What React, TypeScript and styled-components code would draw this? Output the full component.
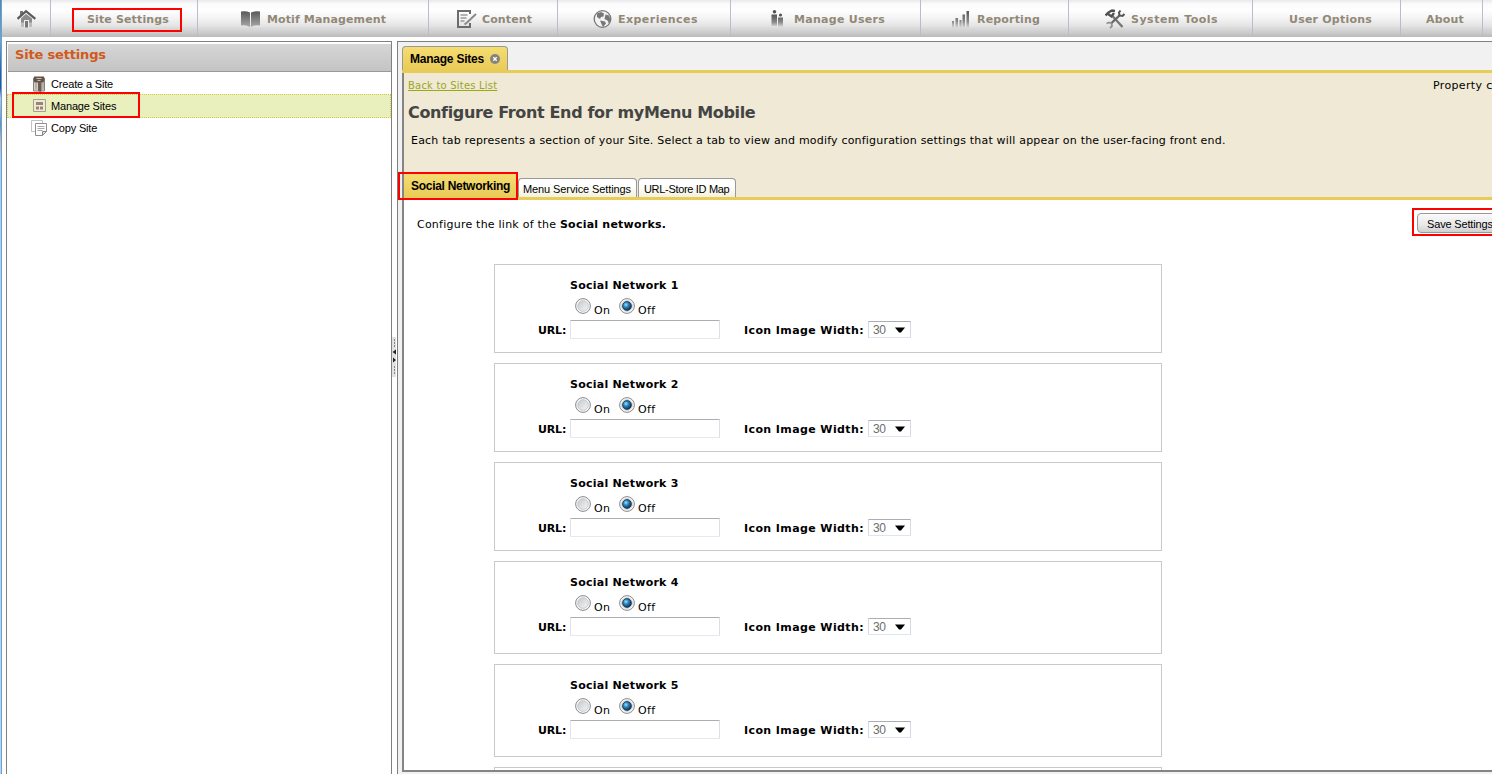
import React from "react";
import styled, { createGlobalStyle } from "styled-components";

const verdana = `"DejaVu Sans", Verdana, sans-serif`;
const arial = `"Liberation Sans", Arial, sans-serif`;

const GlobalStyle = createGlobalStyle`
  * { box-sizing: border-box; }
  body { margin: 0; overflow: hidden; background: #fff; color: #000; font: 11px ${verdana}; }
`;

const Page = styled.div`
  display: flex;
  height: 774px;
  width: 1492px;
  overflow: hidden;
`;

const WindowEdge = styled.div`
  flex: none;
  width: 2px;
  border-right: 1px solid #6f9fcb;
  background: linear-gradient(#4f88b8 0, #6ea6d2 40px, #2a66b0 70px, #1d57a6 88px, #b9cbd8 98px, #5f93c4 125px, #c7b5aa 140px, #a9cff3 160px, #b5d5f7 774px);
`;

const Window = styled.div`
  flex: 1;
  min-width: 0;
  display: flex;
  flex-direction: column;
`;

const NavBar = styled.nav`
  flex: none;
  display: flex;
  height: 37px;
  overflow: hidden;
  background: linear-gradient(#e9e9e9 0, #fbfbfb 4px, #fff 10px, #f4f4f4 18px, #e4e4e4 26px, #dadada 28px, #cbcbcb 33px, #bababa 37px);
`;

const NavItem = styled.a<{ $width: number; $indent: number; $track?: number }>`
  position: relative;
  flex: none;
  display: flex;
  align-items: center;
  width: ${(p) => p.$width}px;
  height: 36px;
  padding: 2px 0 0 ${(p) => p.$indent}px;
  border-right: 1px solid #bcbacd;
  color: #928876;
  font-weight: bold;
  letter-spacing: ${(p) => p.$track ?? 0}px;
  white-space: nowrap;
`;

const NavIcon = styled.svg<{ $gap: number }>`
  flex: none;
  display: block;
  margin-right: ${(p) => p.$gap}px;
`;

const Workspace = styled.div`
  flex: 1;
  min-height: 0;
  display: flex;
  padding: 4px 0 0 4px;
`;

const Sidebar = styled.aside`
  flex: none;
  width: 386px;
  border: 1px solid #808080;
  border-bottom: 0;
`;

const SidebarTitle = styled.h2`
  margin: 2px 0 0 1px;
  height: 28px;
  padding: 3px 0 0 7px;
  border-bottom: 1px solid #999;
  background: linear-gradient(#d6d6d6, #c4c4c4);
  color: #d1591b;
  font: bold 13px/15px ${verdana};
  letter-spacing: -0.17px;
`;

const SideRow = styled.div<{ $active?: boolean }>`
  position: relative;
  display: flex;
  align-items: center;
  height: ${(p) => (p.$active ? 24 : 22)}px;
  margin: ${(p) => (p.$active ? "-1px 0" : "0")};
  border: 1px dotted #d8c74f;
  border-width: ${(p) => (p.$active ? 1 : 0)}px;
  padding-left: ${(p) => (p.$active ? 23 : 24)}px;
  background: ${(p) => (p.$active ? "#e9efbd" : "transparent")};
  font: 11px ${arial};
  letter-spacing: -0.17px;
`;

const SideList = styled.div`
  padding-top: 1px;
`;

const SideIcon = styled.svg`
  display: block;
  margin-right: 4px;
`;

const Splitter = styled.div`
  flex: none;
  display: flex;
  align-items: flex-start;
  width: 5px;
  padding-top: 296px;
`;

const Main = styled.main`
  flex: 1;
  min-width: 0;
  display: flex;
  flex-direction: column;
  padding: 4px 0 0 4px;
  border: solid #808080;
  border-width: 1px 0 0 1px;
  background: #f1f1f1;
`;

const PageTab = styled.div`
  flex: none;
  display: flex;
  align-items: center;
  gap: 6px;
  width: 106px;
  height: 24px;
  padding: 1px 0 0 7px;
  border: 1px solid #999;
  border-bottom: 0;
  border-radius: 4px 4px 0 0;
  background: linear-gradient(#f5dd71, #e9cb58);
  font: bold 12px ${arial};
  letter-spacing: -0.23px;
`;

const Content = styled.div`
  flex: none;
  height: 702px;
  overflow: hidden;
  border-top: 3px solid #e8cc58;
  border-bottom: 2px solid #858585;
  background: #fff;
`;

const ContentEdge = styled.div`
  height: 697px;
  border-left: 2px solid #858585;
`;

const PageHeader = styled.header`
  height: 127px;
  display: flex;
  flex-direction: column;
  border-bottom: 3px solid #e8cc58;
  background: #efe9d5;
`;

const TopLine = styled.div`
  display: flex;
  justify-content: space-between;
  height: 26px;
  padding: 5px 0 0 4px;
`;

const BackLink = styled.a`
  color: #9aa81a;
  font-size: 10px;
  line-height: 15px;
  letter-spacing: 0.2px;
  text-decoration: underline;
`;

const PropertyLabel = styled.span`
  width: 59px;
  white-space: nowrap;
  line-height: 15px;
  letter-spacing: 0.35px;
`;

const PageTitle = styled.h1`
  margin: 0;
  height: 30px;
  padding: 4px 0 0 4px;
  color: #444;
  font: bold 16px/20px ${verdana};
  letter-spacing: -0.35px;
`;

const Intro = styled.p`
  flex: 1;
  margin: 0;
  padding: 4px 0 0 7px;
  line-height: 15px;
  letter-spacing: 0.196px;
`;

const SubTabs = styled.div`
  display: flex;
  align-items: flex-end;
  gap: 1px;
`;

const ActiveSubTab = styled.div`
  width: 113px;
  height: 23px;
  padding: 2px 0 0 7px;
  background: linear-gradient(#f5dd71, #e9cb58);
  font: bold 12px/20px ${arial};
  letter-spacing: -0.29px;
  white-space: nowrap;
`;

const SubTab = styled.div<{ $width: number; $indent: number; $track: number }>`
  width: ${(p) => p.$width}px;
  height: 19px;
  padding-left: ${(p) => p.$indent}px;
  border: 1px solid #999;
  border-bottom: 0;
  border-radius: 4px 4px 0 0;
  background: linear-gradient(#fff 40%, #f2f1dc);
  font: 11px/20px ${arial};
  letter-spacing: ${(p) => p.$track}px;
  white-space: nowrap;
`;

const SectionBar = styled.div`
  display: flex;
  justify-content: space-between;
  align-items: flex-start;
  height: 64px;
  padding: 8px 0 0 13px;
`;

const SectionText = styled.p`
  margin: 9px 0 0;
  line-height: 16px;
  letter-spacing: 0.23px;
`;

const SaveArea = styled.div`
  position: relative;
  width: 80px;
  padding: 5px 0 0 5px;
`;

const SaveButton = styled.button`
  width: 90px;
  height: 20px;
  padding: 2px 0 0 9px;
  border: 1px solid #999;
  border-radius: 4px;
  background: linear-gradient(#fafafa, #e9e9e9 60%, #d0d0d0);
  text-align: left;
  white-space: nowrap;
  font: 11px ${arial};
  letter-spacing: -0.16px;
`;

const Highlight = styled.div<{ $inset: string }>`
  position: absolute;
  inset: ${(p) => p.$inset};
  z-index: 2;
  border: 2px solid #f00;
`;

const CardList = styled.div`
  display: flex;
  flex-direction: column;
  gap: 10px;
  width: 668px;
  margin-left: 90px;
`;

const Card = styled.section<{ $height: number }>`
  flex: none;
  height: ${(p) => p.$height}px;
  padding-top: 13px;
  border: 1px solid #c9c9c9;
`;

const CardTitle = styled.h3`
  margin: 0 0 0 75px;
  height: 14px;
  font: bold 11px/16px ${verdana};
  letter-spacing: 0.25px;
`;

const RadioRow = styled.div`
  display: flex;
  height: 28px;
  padding: 6px 0 0 80px;
`;

const RadioLabel = styled.label<{ $width: number }>`
  display: flex;
  gap: 3px;
  width: ${(p) => p.$width}px;
  letter-spacing: 0.35px;
`;

const RadioText = styled.span`
  padding-top: 6px;
  line-height: 14px;
`;

const FieldRow = styled.div`
  display: flex;
  align-items: center;
  height: 19px;
  padding-left: 43px;
`;

const FieldLabel = styled.label<{ $width: number; $track?: number }>`
  width: ${(p) => p.$width}px;
  padding-top: 2px;
  font-weight: bold;
  line-height: 19px;
  letter-spacing: ${(p) => p.$track ?? 0}px;
  white-space: nowrap;
`;

const UrlInput = styled.input`
  width: 150px;
  height: 19px;
  margin-right: 24px;
  border: 1px solid;
  border-color: #abadb3 #dbdfe6 #e3e9ef #e2e3ea;
  border-radius: 1px;
  outline: none;
`;

const WidthSelect = styled.div`
  display: flex;
  align-items: center;
  gap: 9px;
  width: 43px;
  height: 17px;
  padding-left: 4px;
  border: 1px solid;
  border-color: #abadb3 #d5dbe6 #dfe5ee #d5dbe6;
  border-radius: 1px;
  color: #6d6d6d;
  font: 12px ${arial};
  letter-spacing: -0.4px;
`;

const HomeIcon = () => (
  <NavIcon $gap={0} width="20" height="20" viewBox="0 0 20 20">
    <defs>
      <linearGradient id="fade" x1="0" y1="0" x2="0" y2="1">
        <stop offset="0" stopColor="#555" />
        <stop offset="0.6" stopColor="#888" />
        <stop offset="1" stopColor="#ddd" />
      </linearGradient>
    </defs>
    <path d="M4 9.500 9 5l6 4.500v8.500H4z" fill="#bdbdbd" />
    <path d="M4 9.500 9 5l6 4.500v4H4z" fill="#8d8d8d" />
    <path d="M7 11h5v7.500H7z" fill="#efefef" />
    <path d="M8 12h3v6.500H8z" fill="#777" />
    <path d="M3 2h3v4H3z" fill="#777" />
    <path d="M0.500 9.800 9 2.200l9.300 7.600" fill="none" stroke="#5a5a5a" strokeWidth="2.300" />
  </NavIcon>
);

const BookIcon = () => (
  <NavIcon $gap={7} width="19" height="18" viewBox="0 0 19 18">
    <defs>
      <linearGradient id="book" x1="0" y1="0" x2="0" y2="1">
        <stop offset="0" stopColor="#585858" />
        <stop offset="1" stopColor="#a8a8a8" />
      </linearGradient>
    </defs>
    <path d="M0 1.500Q5 0.500 9 2.500V17Q5 14.500 0 15.500zM19 1.500Q14 0.500 10 2.500V17Q14 14.500 19 15.500z" fill="url(#book)" />
  </NavIcon>
);

const ContentIcon = () => (
  <NavIcon $gap={5} width="20" height="20" viewBox="0 0 20 20" fill="none" stroke="#6c6c6c">
    <path d="M13 5V2H1v16h12v-4" strokeWidth="2" />
    <path d="M3.500 6h7M3.500 9h6M3.500 12h4" />
    <path d="M19 5 10 13.500l-2.500 2" stroke="#8a8a8a" strokeWidth="2" />
  </NavIcon>
);

const GlobeIcon = () => (
  <NavIcon $gap={6} width="19" height="20" viewBox="0 0 19 20">
    <circle cx="9.500" cy="10" r="8.300" fill="#f2f2f2" stroke="#777" strokeWidth="1.300" />
    <path d="M4 4.500 8 3l3 1.500-.5 3L8 8l-1 2-3-2zM12.500 5.500l3.500 1 1.500 4-1.500 4-1.500-3-3-1.500zM7 11.500l5 1 1 2-3 3.500-1.500-3z" fill="#777" />
  </NavIcon>
);

const UsersIcon = () => (
  <NavIcon $gap={11} width="12" height="20" viewBox="0 0 12 20">
    <circle cx="3.500" cy="2.800" r="1.800" fill="#555" />
    <circle cx="9.500" cy="6" r="1.600" fill="#555" />
    <path d="M0.500 5.500H6V17H.5zM7 8.500h5V18H7z" fill="url(#fade)" />
  </NavIcon>
);

const ChartIcon = () => (
  <NavIcon $gap={8} width="17" height="20" viewBox="0 0 17 20">
    <path d="M0 12h2v7H0zM3.500 9h2.500v10H3.500zM7.500 11h2v8h-2zM10.500 5.500H13V19h-2.500zM14.500 2H17v17h-2.500z" fill="url(#fade)" />
  </NavIcon>
);

const ToolsIcon = () => (
  <NavIcon $gap={6} width="20" height="20" viewBox="0 0 20 20" fill="none">
    <path d="M6.500 6 17.500 18" stroke="#777" strokeWidth="2.400" />
    <path d="M0.500 6.500 3.500 3.500 7 1.500l3 .5M3 5l3.500 2.500L9 4" stroke="#505050" strokeWidth="2.300" />
    <path d="M15 6 6 14.500" stroke="#666" strokeWidth="2.400" />
    <path d="M15.500 1.500 14 3.500l.5 3 3 .5L19.500 5" stroke="#555" strokeWidth="2" />
    <path d="M1.500 14.500l2.500-1 2.500 1 .5 2.500-2 2" stroke="#929292" strokeWidth="1.800" />
  </NavIcon>
);

const CreateIcon = () => (
  <SideIcon width="16" height="16" viewBox="0 0 16 16">
    <path d="M2.500 2.500h11V15h-11z" fill="#d6d1cb" stroke="#8c8177" />
    <path d="M3 .500h10l.5 3-1 3h-9l-1-3z" fill="#62544a" />
    <path d="M5.500 2.500h5M6.500 4.500h3" stroke="#c9bdb0" />
    <path d="M5 6v7.500M12 6v7.500" stroke="#9a8f85" />
    <path d="M7 6h3.500v9L9 16l-2-1.500z" fill="#6d5e53" />
  </SideIcon>
);

const ManageIcon = () => (
  <SideIcon width="16" height="16" viewBox="0 0 16 16">
    <path d="M2.500 1.500h12v12h-12z" fill="#f0ead2" stroke="#a89f8c" />
    <path d="M5 4h7v3H5zM5 8.500h3v3H5zM9 8.500h3v3H9z" fill="#9a8479" />
  </SideIcon>
);

const CopyIcon = () => (
  <SideIcon width="16" height="16" viewBox="0 0 16 16" fill="#fff">
    <path d="M.5.500h11v11H.5z" stroke="#c2c2c2" />
    <path d="M4.500 3.500h11v8l-4 4h-7z" stroke="#8f8f8f" />
    <path d="M6.500 6.500h7M6.500 8.500h7M6.500 10.500h5" stroke="#aaa" />
    <path d="M11.500 15.500v-4h4z" fill="#ddd" stroke="#888" />
  </SideIcon>
);

const SplitterHandle = () => (
  <svg width="4" height="40" viewBox="0 0 4 40">
    <path d="M0 0h4v40H0z" fill="#e2e2e2" />
    <path d="M2.500 2v9M2.500 29v9" stroke="#888" strokeDasharray="2 1" />
    <path d="M4 12.500v5L.5 15zM1 20.500v5L4 23z" fill="#222" />
  </svg>
);

const CloseIcon = () => (
  <svg width="10" height="10" viewBox="0 0 10 10">
    <circle cx="5" cy="5" r="5" fill="#85837f" />
    <path d="M3.300 3.300l3.400 3.400M6.700 3.300 3.300 6.700" stroke="#fff" strokeWidth="1.300" />
  </svg>
);

const Radio = ({ on }: { on?: boolean }) => (
  <svg width="16" height="16" viewBox="0 0 16 16">
    <defs>
      <radialGradient id="dot" cx="0.38" cy="0.35" r="0.65">
        <stop offset="0" stopColor="#9fe4fb" />
        <stop offset="0.4" stopColor="#2d8fc6" />
        <stop offset="1" stopColor="#0d2f55" />
      </radialGradient>
      <linearGradient id="well" x1="0" y1="0" x2="1" y2="1">
        <stop offset="0" stopColor="#c4c8cc" />
        <stop offset="1" stopColor="#f6f6f6" />
      </linearGradient>
    </defs>
    <circle cx="8" cy="8" r="7.400" fill="#f6f6f6" stroke="#8b8b8b" />
    <circle cx="8" cy="8" r="5.300" fill="url(#well)" stroke="#bfc3c7" strokeWidth="0.800" />
    {on && <circle cx="8" cy="8" r="4.400" fill="url(#dot)" stroke="#16324f" strokeWidth="0.800" />}
  </svg>
);

const SelectArrow = () => (
  <svg width="10" height="6" viewBox="0 0 10 6">
    <path d="M0 .5h10L6 5.500H4z" fill="#000" />
  </svg>
);

const NetworkCard = ({ index, height }: { index: number; height: number }) => (
  <Card $height={height}>
    <CardTitle>Social Network {index}</CardTitle>
    <RadioRow>
      <RadioLabel $width={44}>
        <Radio />
        <RadioText>On</RadioText>
      </RadioLabel>
      <RadioLabel $width={44}>
        <Radio on />
        <RadioText>Off</RadioText>
      </RadioLabel>
    </RadioRow>
    <FieldRow>
      <FieldLabel $width={32} $track={-0.15}>URL:</FieldLabel>
      <UrlInput />
      <FieldLabel $width={124} $track={0.4}>Icon Image Width:</FieldLabel>
      <WidthSelect>
        30
        <SelectArrow />
      </WidthSelect>
    </FieldRow>
  </Card>
);

/* Reaches past the clipped content pane, so it sits above the whole page. */
const TabMarker = styled.div`
  position: absolute;
  left: 398px;
  top: 172px;
  width: 120px;
  height: 28px;
  border: 2px solid #f00;
`;

const cardHeights = [89, 89, 89, 93, 93];

export default function App() {
  return (
    <Page>
      <GlobalStyle />
      <WindowEdge />
      <Window>
        <NavBar>
          <NavItem $width={49} $indent={15}><HomeIcon /></NavItem>
          <NavItem $width={147} $indent={36} $track={0.14}>
            Site Settings
            <Highlight $inset="8px 15px 4px 21px" />
          </NavItem>
          <NavItem $width={231} $indent={43} $track={0.12}><BookIcon />Motif Management</NavItem>
          <NavItem $width={129} $indent={28} $track={0.12}><ContentIcon />Content</NavItem>
          <NavItem $width={173} $indent={35} $track={0.46}><GlobeIcon />Experiences</NavItem>
          <NavItem $width={190} $indent={40} $track={0.28}><UsersIcon />Manage Users</NavItem>
          <NavItem $width={148} $indent={31} $track={0.17}><ChartIcon />Reporting</NavItem>
          <NavItem $width={184} $indent={36} $track={0.5}><ToolsIcon />System Tools</NavItem>
          <NavItem $width={148} $indent={36} $track={0.22}>User Options</NavItem>
          <NavItem $width={82} $indent={25} $track={0.2}>About</NavItem>
        </NavBar>
        <Workspace>
          <Sidebar>
            <SidebarTitle>Site settings</SidebarTitle>
            <SideList>
              <SideRow><CreateIcon />Create a Site</SideRow>
              <SideRow $active>
                <ManageIcon />Manage Sites
                <Highlight $inset="-3px 250px -1px 4px" />
              </SideRow>
              <SideRow><CopyIcon />Copy Site</SideRow>
            </SideList>
          </Sidebar>
          <Splitter><SplitterHandle /></Splitter>
          <Main>
            <PageTab>Manage Sites<CloseIcon /></PageTab>
            <Content>
              <ContentEdge>
                <PageHeader>
                  <TopLine>
                    <BackLink>Back to Sites List</BackLink>
                    <PropertyLabel>Property c</PropertyLabel>
                  </TopLine>
                  <PageTitle>Configure Front End for myMenu Mobile</PageTitle>
                  <Intro>
                    Each tab represents a section of your Site. Select a tab to view and modify configuration settings that will appear on the user-facing front end.
                  </Intro>
                  <SubTabs>
                    <ActiveSubTab>Social Networking</ActiveSubTab>
                    <SubTab $width={119} $indent={4} $track={-0.1}>Menu Service Settings</SubTab>
                    <SubTab $width={98} $indent={5} $track={-0.32}>URL-Store ID Map</SubTab>
                  </SubTabs>
                </PageHeader>
                <SectionBar>
                  <SectionText>
                    Configure the link of the <b>Social networks.</b>
                  </SectionText>
                  <SaveArea>
                    <SaveButton>Save Settings</SaveButton>
                    <Highlight $inset="0 -20px -3px 0" />
                  </SaveArea>
                </SectionBar>
                <CardList>
                  {cardHeights.map((height, i) => (
                    <NetworkCard key={i} index={i + 1} height={height} />
                  ))}
                  <Card $height={93} />
                </CardList>
              </ContentEdge>
            </Content>
          </Main>
        </Workspace>
      </Window>
      <TabMarker />
    </Page>
  );
}
